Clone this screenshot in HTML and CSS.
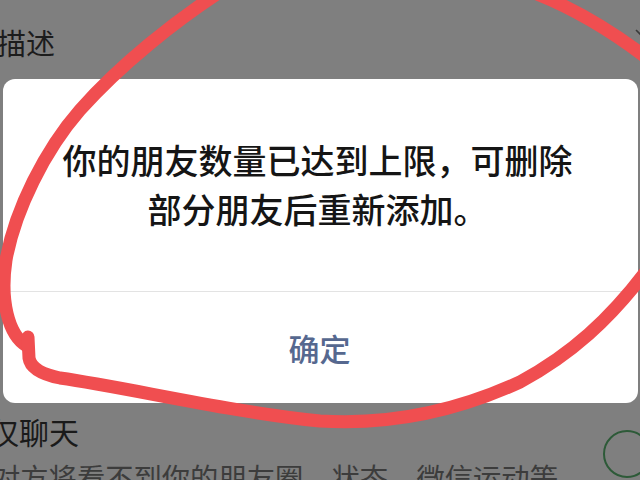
FILE: index.html
```html
<!DOCTYPE html>
<html lang="zh-CN">
<head>
<meta charset="utf-8">
<title>提示</title>
<link rel="stylesheet" href="styles.css">
</head>
<body>
<div class="page">
  <div class="top-row">
    <span class="top-label">描述</span>
    <svg class="chev" width="8" height="12" viewBox="0 0 8 12"><path d="M1 2 L7 8" stroke="#3a3a3a" stroke-width="1.6" fill="none"/></svg>
  </div>
  <div class="dialog">
    <div class="dialog-body">
      <p class="msg">你的朋友数量已达到上限，可删除部分朋友后重新添加。</p>
    </div>
    <div class="dialog-foot">
      <span class="btn">确定</span>
    </div>
  </div>
  <div class="bottom-row">
    <div class="bottom-text">
      <div class="b-title">仅聊天</div>
      <div class="b-sub">对方将看不到你的朋友圈、状态、微信运动等</div>
    </div>
    <div class="toggle"></div>
  </div>
</div>
<svg class="annot" width="640" height="480" viewBox="0 0 640 480">
  <g fill="none" stroke="#f04e50" stroke-width="13" stroke-linecap="round" stroke-linejoin="round">
    <path d="M226 -12 C176 20 120 65 80 110 C45 150 15 210 6 260 C0 300 8 335 27 346"/>
    <path d="M28 337 L29 358 Q31 372 60 378 C130 388 230 412 320 421 C400 426 470 405 520 382 C570 355 610 320 650 266"/>
    <path d="M532 -8 Q592 15 652 62"/>
  </g>
</svg>
</body>
</html>
```
FILE: styles.css
```css
html, body {
  margin: 0;
  padding: 0;
}
body {
  width: 640px;
  height: 480px;
  overflow: hidden;
  background: #7f7f7f;
  font-family: "Noto Sans CJK SC", "Noto Sans", sans-serif;
  position: relative;
}
.page {
  display: flex;
  flex-direction: column;
  width: 640px;
  height: 480px;
}
.top-row {
  height: 79px;
  display: flex;
  justify-content: space-between;
  align-items: flex-start;
  flex-shrink: 0;
}
.top-label {
  font-size: 29px;
  line-height: 29px;
  margin-top: 28px;
  margin-left: -3px;
  color: #1c1c1c;
}
.chev {
  margin-top: 28px;
  margin-right: -3px;
}
.dialog {
  margin: 0 2px 0 3px;
  height: 324px;
  flex-shrink: 0;
  background: #ffffff;
  border-radius: 12px;
  display: flex;
  flex-direction: column;
  overflow: hidden;
}
.dialog-body {
  height: 213px;
  box-sizing: border-box;
  padding: 56px 56px 0 50px;
  border-bottom: 1px solid #e3e3e3;
}
.msg {
  margin: 0;
  font-size: 34px;
  line-height: 49px;
  font-weight: 500;
  color: #151515;
  text-align: center;
}
.dialog-foot {
  flex: 1;
  display: flex;
  align-items: center;
  justify-content: center;
}
.btn {
  font-size: 31px;
  line-height: 31px;
  font-weight: 500;
  color: #56688f;
  margin-left: -2px;
}
.bottom-row {
  display: flex;
  justify-content: space-between;
  align-items: flex-start;
}
.bottom-text {
  display: flex;
  flex-direction: column;
}
.b-title {
  font-size: 30px;
  line-height: 30px;
  margin-top: 13px;
  margin-left: -11px;
  color: #1a1a1a;
  white-space: nowrap;
}
.b-sub {
  font-size: 28.3px;
  line-height: 28px;
  margin-top: 17px;
  margin-left: -8px;
  color: #3c3c3c;
  white-space: nowrap;
}
.toggle {
  width: 44px;
  height: 44px;
  border: 2px solid #2d5a38;
  border-radius: 50%;
  margin-top: 27px;
  margin-right: -11px;
  flex-shrink: 0;
}
.annot {
  position: absolute;
  left: 0;
  top: 0;
  pointer-events: none;
}
```
